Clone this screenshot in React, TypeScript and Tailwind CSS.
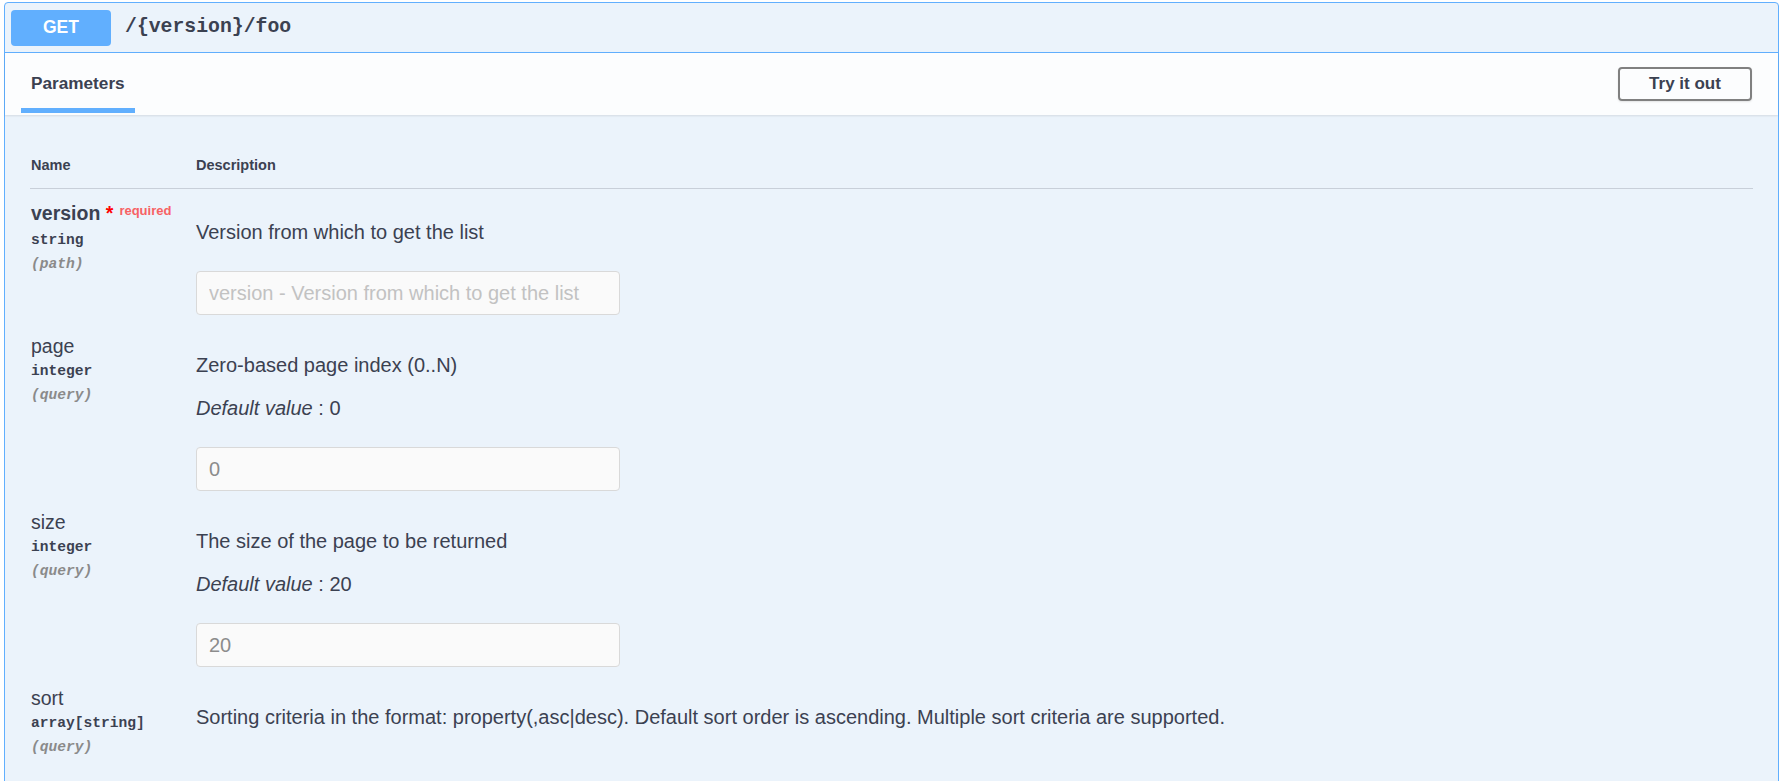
import React from "react";

type Param = {
  name: string;
  required?: boolean;
  type: string;
  location: string;
  description: string;
  defaultValue?: string;
  placeholder?: string;
  value?: string;
  hasInput: boolean;
};

const params: Param[] = [
  {
    name: "version",
    required: true,
    type: "string",
    location: "(path)",
    description: "Version from which to get the list",
    placeholder: "version - Version from which to get the list",
    hasInput: true,
  },
  {
    name: "page",
    type: "integer",
    location: "(query)",
    description: "Zero-based page index (0..N)",
    defaultValue: "0",
    value: "0",
    hasInput: true,
  },
  {
    name: "size",
    type: "integer",
    location: "(query)",
    description: "The size of the page to be returned",
    defaultValue: "20",
    value: "20",
    hasInput: true,
  },
  {
    name: "sort",
    type: "array[string]",
    location: "(query)",
    description:
      "Sorting criteria in the format: property(,asc|desc). Default sort order is ascending. Multiple sort criteria are supported.",
    hasInput: false,
  },
];

function ParamRow({ p }: { p: Param }) {
  return (
    <div className="flex pt-[12px] pb-[7px]">
      <div className="w-[166px] shrink-0 pl-[1px]">
        <div className="leading-[25px] text-[19.5px] text-[#3b4151] whitespace-nowrap">
          {p.required ? (
            <>
              <span className="font-bold">{p.name}</span>
              <span className="font-bold text-[#ff0000]">&nbsp;*</span>
              <span className="relative top-[-5px] pl-[6px] text-[13px] font-bold text-[#f76164]">
                required
              </span>
            </>
          ) : (
            <span>{p.name}</span>
          )}
        </div>
        <div className="leading-[24px] text-[14.6px] font-bold font-['Liberation_Mono',monospace] text-[#3b4151]">
          {p.type}
        </div>
        <div className="leading-[24px] text-[14.6px] italic font-bold font-['Liberation_Mono',monospace] text-[#8a8a8a]">
          {p.location}
        </div>
      </div>
      <div className="flex-1 min-w-0">
        <p className="mt-[19px] text-[20px] leading-[24px] text-[#3b4151] whitespace-nowrap">
          {p.description}
        </p>
        {p.defaultValue !== undefined && (
          <p className="mt-[19px] text-[20px] leading-[24px] text-[#3b4151]">
            <i>Default value</i> : {p.defaultValue}
          </p>
        )}
        {p.hasInput && (
          <input
            readOnly
            placeholder={p.placeholder}
            defaultValue={p.value}
            className="mt-[27px] block h-[44px] w-[424px] rounded-[4px] border border-[#d9d9d9] bg-[#fafafa] px-[12px] text-[20px] text-[#8c8c8c] placeholder:text-[#c2c2c2] outline-none font-['Liberation_Sans',Arial,sans-serif]"
          />
        )}
      </div>
    </div>
  );
}

export default function App() {
  return (
    <div className="min-h-screen bg-white pt-[2px] px-[4px] font-['Liberation_Sans',Arial,sans-serif] overflow-hidden">
      <div className="rounded-[4px] border border-[#61affe] bg-[#ebf3fb]">
        {/* Summary */}
        <div className="flex h-[50px] items-center border-b border-[#61affe] pl-[6px]">
          <div className="flex h-[36px] w-[100px] items-center justify-center rounded-[4px] bg-[#61affe] text-[17.5px] font-bold text-white">
            GET
          </div>
          <div className="ml-[14px] font-['Liberation_Mono',monospace] text-[19.8px] font-bold text-[#3b4151]">
            /{"{version}"}/foo
          </div>
        </div>

        {/* Section header */}
        <div className="flex h-[62px] items-center justify-between bg-[#fcfdfe] pl-[16px] pr-[26px] shadow-[0_1px_2px_rgba(0,0,0,0.1)]">
          <div className="relative flex h-full items-center px-[10px]">
            <span className="text-[17.2px] font-bold text-[#3b4151]">Parameters</span>
            <span className="absolute bottom-[2px] left-0 right-0 h-[5px] bg-[#61affe]" />
          </div>
          <button className="h-[34px] w-[134px] rounded-[4px] border-2 border-[#808080] bg-transparent text-[17px] font-bold text-[#3b4151] shadow-[0_1px_2px_rgba(0,0,0,0.1)]">
            Try it out
          </button>
        </div>

        {/* Table */}
        <div className="px-[25px] pt-[1px] pb-[60px]">
          <div className="flex border-b border-[#c8cfd9] pt-[39px] pb-[13px] text-[14.5px] font-bold leading-[20px] text-[#3b4151]">
            <div className="w-[166px] shrink-0 pl-[1px]">Name</div>
            <div className="flex-1">Description</div>
          </div>
          {params.map((p) => (
            <ParamRow key={p.name} p={p} />
          ))}
        </div>
      </div>
    </div>
  );
}
